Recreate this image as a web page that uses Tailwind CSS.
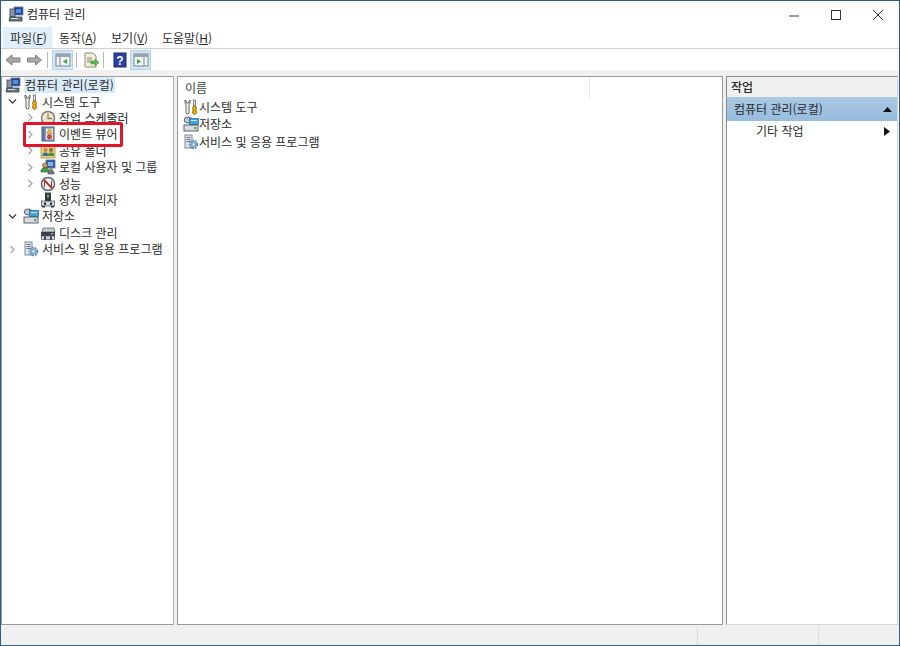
<!DOCTYPE html>
<html lang="ko">
<head>
<meta charset="utf-8">
<title>컴퓨터 관리</title>
<script src="https://cdn.jsdelivr.net/npm/@tailwindcss/browser@4"></script>
</head>
<body class="m-0 overflow-hidden bg-white">
<svg width="0" height="0" class="absolute">
  <defs>
    <symbol id="computer" viewBox="0 0 16 16">
      <rect x="6" y="1" width="9" height="8" fill="#23439a" stroke="#6a7a96" stroke-width=".8"/>
      <rect x="8" y="3" width="5" height="4" fill="#4f90e0"/>
      <rect x="2" y="3" width="5" height="8" fill="#8a93a3" stroke="#3d4656" stroke-width=".8"/>
      <path d="M2 11h12v4H1z" fill="#6f7887" stroke="#333b48" stroke-width=".8"/>
      <rect x="3" y="12" width="7" height="1" fill="#d8dde5"/>
      <path d="M3 14h2M7 14h2M11 14h2" stroke="#2b8f3a"/>
    </symbol>
    <symbol id="tools" viewBox="0 0 16 16">
      <path d="M2 1v3l1 2v8l1 1h1l1-1V6l1-2V1L6 2v2H3.500V2z" fill="#f2f2f2" stroke="#555" stroke-width=".9"/>
      <path d="M10.500 1h2v6h-2z" fill="#e8e8e8" stroke="#666" stroke-width=".8"/>
      <path d="M10.500 7h2l1 2-.5 2 .5 3-1.500 1.500h-1L9.500 14l.5-3-.5-2z" fill="#f2a900" stroke="#7a5200" stroke-width=".7"/>
    </symbol>
    <symbol id="clock" viewBox="0 0 16 16">
      <circle cx="8" cy="8" r="6.500" fill="#efe6cf" stroke="#7a7f86" stroke-width="1.500"/>
      <path d="M8 3.500v5h4" fill="none" stroke="#a08430" stroke-width="1.300"/>
    </symbol>
    <symbol id="viewer" viewBox="0 0 16 16">
      <rect x="2" y="1" width="12" height="14" fill="#8aa0c0" stroke="#4c5f83"/>
      <path d="M2.500 1.500h2v13h-2z" fill="#566c96"/>
      <rect x="6" y="2.500" width="7" height="11" fill="#dfe4ec"/>
      <path d="M9.500 2.500l2.500 5H7z" fill="#f3c21a" stroke="#a57a00" stroke-width=".5"/>
      <circle cx="9.500" cy="10.800" r="2.200" fill="#d8423c" stroke="#8a1c18" stroke-width=".5"/>
    </symbol>
    <symbol id="share" viewBox="0 0 16 16">
      <path d="M1 2h5l1 1h8v12H1z" fill="#ecd27c" stroke="#a58a3c" stroke-width=".8"/>
      <circle cx="5.500" cy="7" r="2" fill="#b98a50"/>
      <path d="M2.500 13v-2l1.500-1.500h3L8 11v2z" fill="#3f6f9a"/>
      <circle cx="11" cy="7" r="2" fill="#8a6a3a"/>
      <path d="M8 13v-2l1.500-1.500h3L14 11v2z" fill="#4f8a48"/>
    </symbol>
    <symbol id="users" viewBox="0 0 16 16">
      <rect x="6" y="1" width="9" height="8" fill="#2f5cb0" stroke="#5a6c8c" stroke-width=".8"/>
      <rect x="8" y="3" width="5" height="4" fill="#80b4ec"/>
      <circle cx="5" cy="6.500" r="2.500" fill="#c89a50" stroke="#6a5020" stroke-width=".6"/>
      <path d="M1 13v-2l2-2h4l2 2v2z" fill="#45a050" stroke="#2a5a30" stroke-width=".6"/>
      <circle cx="11" cy="10" r="1.800" fill="#b08a5a"/>
      <path d="M8 15v-2l1.500-1.500h3L14 13v2z" fill="#6c7788" stroke="#444c5a" stroke-width=".6"/>
    </symbol>
    <symbol id="perf" viewBox="0 0 16 16">
      <circle cx="8" cy="8" r="6.500" fill="#f6f6f6" stroke="#5f646b" stroke-width="1.500"/>
      <path d="M4.500 11V5M11.500 11V5" fill="none" stroke="#555" stroke-width="1.100"/>
      <path d="M4 3.800l8 8.400" fill="none" stroke="#c8201c" stroke-width="1.900"/>
    </symbol>
    <symbol id="device" viewBox="0 0 16 16">
      <rect x="5.500" y="1" width="5" height="8" fill="#30363f" stroke="#1d2128" stroke-width=".8"/>
      <rect x="7" y="2.500" width="2" height="3" fill="#57b060"/>
      <rect x="1.500" y="9" width="13" height="5" fill="#d5d8dd" stroke="#4c5460" stroke-width=".8"/>
      <rect x="4" y="10.500" width="2" height="2.500" fill="#30363f"/>
      <rect x="10" y="10.500" width="2" height="2.500" fill="#30363f"/>
      <path d="M2 14h3v1.500H2zM11 14h3v1.500h-3z" fill="#30363f"/>
    </symbol>
    <symbol id="storage" viewBox="0 0 16 16">
      <ellipse cx="5" cy="4" rx="3.800" ry="3" fill="#c5cad1" stroke="#4c5460" stroke-width=".9"/>
      <rect x="6.500" y="2.500" width="9" height="6" fill="#34a4dc" stroke="#3c6a8e" stroke-width=".8"/>
      <rect x="8" y="4" width="6" height="1.200" fill="#b8e4f6"/>
      <rect x="1" y="9" width="14" height="6" fill="#d7dadf" stroke="#4c5460" stroke-width=".9"/>
      <rect x="11" y="11" width="2.400" height="2" fill="#57b04a"/>
    </symbol>
    <symbol id="disk" viewBox="0 0 16 16">
      <path d="M3 3h11l1 4H2z" fill="#c9ccd1" stroke="#4c5460" stroke-width=".7"/>
      <rect x="1" y="7" width="14" height="4" fill="#3a414b"/>
      <rect x="11" y="8" width="2.200" height="1.500" fill="#6fc05f"/>
      <rect x="1.500" y="11" width="13" height="3.500" fill="#d5d8dd" stroke="#4c5460" stroke-width=".7"/>
      <rect x="4" y="11.500" width="2" height="3" fill="#3a414b"/>
      <rect x="10" y="11.500" width="2" height="3" fill="#3a414b"/>
    </symbol>
    <symbol id="services" viewBox="0 0 16 16">
      <rect x="2" y="1" width="7" height="13" fill="#dfe2e6" stroke="#7a8088" stroke-width=".9"/>
      <path d="M3.500 3.500h4M3.500 5.500h4M3.500 7.500h4" stroke="#6f7680"/>
      <circle cx="10.500" cy="10.500" r="3.700" fill="none" stroke="#5f8fc0" stroke-width="2.200" stroke-dasharray="1.800 .8"/>
      <circle cx="10.500" cy="10.500" r="2.800" fill="#7aa5d0"/>
      <circle cx="10.500" cy="10.500" r="1.200" fill="#f0f4f8"/>
    </symbol>
    <symbol id="chev-r" viewBox="0 0 9 9"><path d="M2.500 1l3.500 3.500L2.500 8" fill="none" stroke="#a6a6a6" stroke-width="1.200"/></symbol>
    <symbol id="chev-d" viewBox="0 0 9 9"><path d="M1 2.500l3.500 3.500L8 2.500" fill="none" stroke="#404040" stroke-width="1.300"/></symbol>
  </defs>
</svg>

<div class="w-[900px] h-[646px] flex flex-col border border-[#2f5f7f] bg-[#f0f0f0] text-[12px] leading-none text-[#2a2a2a] [font-family:'Noto_Sans_CJK_KR','Noto_Sans',sans-serif]">

  <!-- title bar -->
  <div class="h-[26px] shrink-0 flex items-center bg-white pl-[7px]">
    <svg class="w-4 h-4 mr-[3px]"><use href="#computer"/></svg>
    <span>컴퓨터 관리</span>
    <div class="ml-auto flex items-center">
      <svg class="w-[42px] h-[25px]" viewBox="0 0 42 25"><path d="M16 14h10" stroke="#333" stroke-width="1"/></svg>
      <svg class="w-[42px] h-[25px]" viewBox="0 0 42 25"><rect x="16.500" y="8.500" width="9" height="9" fill="none" stroke="#333"/></svg>
      <svg class="w-[42px] h-[25px]" viewBox="0 0 42 25"><path d="M16 8l10 10M26 8L16 18" stroke="#333"/></svg>
    </div>
  </div>

  <!-- menu -->
  <div class="h-[22px] shrink-0 flex items-stretch bg-white border-b border-[#d0d0d0] pl-[2px]">
    <div class="w-[49px] flex items-center pl-[7px] bg-[#e1effa]">파일(<u>F</u>)</div>
    <div class="w-[52px] flex items-center pl-[7px]">동작(<u>A</u>)</div>
    <div class="w-[51px] flex items-center pl-[7px]">보기(<u>V</u>)</div>
    <div class="w-[70px] flex items-center pl-[7px]">도움말(<u>H</u>)</div>
  </div>

  <!-- toolbar -->
  <div class="h-[21px] shrink-0 flex items-center bg-white pl-[4px]">
    <svg class="w-4 h-4 mr-[6px]" viewBox="0 0 16 16"><path d="M1 8l6-5v3h8v4H7v3z" fill="#a8a8a8" stroke="#7e7e7e"/></svg>
    <svg class="w-[15px] h-4 mr-[5px]" viewBox="0 0 15 16"><path d="M14.500 8L8.500 3v3H.5v4h8v3z" fill="#a8a8a8" stroke="#7e7e7e"/></svg>
    <div class="w-px h-[16px] bg-[#b8b8b8] mr-[4px]"></div>
    <div class="w-[21px] h-[20px] bg-[#cfe6f7] border border-[#b0d4ee] flex items-center justify-center mr-[3px]">
      <svg class="w-4 h-4" viewBox="0 0 16 16"><rect x="1" y="2" width="14" height="12" fill="#f4f4f4" stroke="#7d8790"/><path d="M1 2h14v3H1z" fill="#9aa4ae"/><path d="M5 5v9" stroke="#7d8790"/><path d="M12 7l-4 2.500 4 2.500z" fill="#35a045"/></svg>
    </div>
    <div class="w-px h-[16px] bg-[#b8b8b8] mr-[6px]"></div>
    <svg class="w-4 h-4 mr-[4px]" viewBox="0 0 16 16"><path d="M2 1h8l3 3v11H2z" fill="#f5efd8" stroke="#8f8f80"/><path d="M4 6h5M4 8h5M4 10h5" stroke="#8a8a8a"/><path d="M8 9h4V7l4 3.500-4 3.500v-2H8z" fill="#58b848" stroke="#3d8a35" stroke-width=".5"/></svg>
    <div class="w-px h-[16px] bg-[#b8b8b8] mr-[8px]"></div>
    <svg class="w-4 h-4 mr-[2px]" viewBox="0 0 16 16"><rect x="2" y="1" width="12" height="14" fill="#2a3f9e" stroke="#1c2a70"/><text x="8" y="12.500" text-anchor="middle" font-size="12" font-weight="700" fill="#fff" font-family="Liberation Sans">?</text></svg>
    <div class="w-[21px] h-[20px] bg-[#cfe6f7] border border-[#b0d4ee] flex items-center justify-center">
      <svg class="w-4 h-4" viewBox="0 0 16 16"><rect x="1" y="2" width="14" height="12" fill="#f4f4f4" stroke="#7d8790"/><path d="M1 2h14v3H1z" fill="#9aa4ae"/><path d="M11 5v9" stroke="#7d8790"/><path d="M4 7l4 2.500L4 12z" fill="#35a045"/></svg>
    </div>
  </div>

  <!-- panes -->
  <div class="flex-1 min-h-0 flex pt-[6px] pb-[1px] gap-[3px]">
    <!-- tree -->
    <div class="w-[173px] shrink-0 bg-white border border-[#9a9a9a] border-r-[#b0b0b0] pl-[2px]">
      <div class="h-[16.400px] flex items-center">
        <svg class="w-4 h-4 mr-[3px] ml-[1px]"><use href="#computer"/></svg>
        <span class="bg-[#d9ebf9] h-[16px] leading-[16px] px-[1px]">컴퓨터 관리(로컬)</span>
      </div>
      <div class="h-[16.400px] flex items-center pl-[4px]"><svg class="w-[9px] h-[9px] mr-[6px]"><use href="#chev-d"/></svg><svg class="w-4 h-4 mr-[3px]"><use href="#tools"/></svg><span>시스템 도구</span></div>
      <div class="h-[16.400px] flex items-center pl-[22px]"><svg class="w-[9px] h-[9px] mr-[5px]"><use href="#chev-r"/></svg><svg class="w-4 h-4 mr-[3px]"><use href="#clock"/></svg><span>작업 스케줄러</span></div>
      <div class="h-[16.400px] flex items-center pl-[22px] relative"><svg class="w-[9px] h-[9px] mr-[5px]"><use href="#chev-r"/></svg><svg class="w-4 h-4 mr-[3px]"><use href="#viewer"/></svg><span>이벤트 뷰어</span>
        <div class="absolute left-[19px] top-[-4px] w-[100px] h-[25px] border-[3px] border-[#e0142a] rounded-[2px]"></div>
      </div>
      <div class="h-[16.400px] flex items-center pl-[22px]"><svg class="w-[9px] h-[9px] mr-[5px]"><use href="#chev-r"/></svg><svg class="w-4 h-4 mr-[3px]"><use href="#share"/></svg><span>공유 폴더</span></div>
      <div class="h-[16.400px] flex items-center pl-[22px]"><svg class="w-[9px] h-[9px] mr-[5px]"><use href="#chev-r"/></svg><svg class="w-4 h-4 mr-[3px]"><use href="#users"/></svg><span>로컬 사용자 및 그룹</span></div>
      <div class="h-[16.400px] flex items-center pl-[22px]"><svg class="w-[9px] h-[9px] mr-[5px]"><use href="#chev-r"/></svg><svg class="w-4 h-4 mr-[3px]"><use href="#perf"/></svg><span>성능</span></div>
      <div class="h-[16.400px] flex items-center pl-[36px]"><svg class="w-4 h-4 mr-[3px]"><use href="#device"/></svg><span>장치 관리자</span></div>
      <div class="h-[16.400px] flex items-center pl-[4px]"><svg class="w-[9px] h-[9px] mr-[6px]"><use href="#chev-d"/></svg><svg class="w-4 h-4 mr-[3px]"><use href="#storage"/></svg><span>저장소</span></div>
      <div class="h-[16.400px] flex items-center pl-[36px]"><svg class="w-4 h-4 mr-[3px]"><use href="#disk"/></svg><span>디스크 관리</span></div>
      <div class="h-[16.400px] flex items-center pl-[4px]"><svg class="w-[9px] h-[9px] mr-[6px]"><use href="#chev-r"/></svg><svg class="w-4 h-4 mr-[3px]"><use href="#services"/></svg><span>서비스 및 응용 프로그램</span></div>
    </div>

    <!-- list -->
    <div class="w-[546px] shrink-0 bg-white border border-[#9a9a9a]">
      <div class="h-[21px] flex items-center pl-[7px] text-[#444]">
        <span class="w-[404px]">이름</span>
        <div class="w-px h-[21px] bg-[#e5e5e5]"></div>
      </div>
      <div class="h-[17.500px] flex items-center pl-[5px]"><svg class="w-4 h-4"><use href="#tools"/></svg><span>시스템 도구</span></div>
      <div class="h-[17.500px] flex items-center pl-[5px]"><svg class="w-4 h-4"><use href="#storage"/></svg><span>저장소</span></div>
      <div class="h-[17.500px] flex items-center pl-[5px]"><svg class="w-4 h-4"><use href="#services"/></svg><span>서비스 및 응용 프로그램</span></div>
    </div>

    <!-- actions -->
    <div class="flex-1 min-w-0 bg-white border border-[#d8d8d8] border-l-[#8a8a8a] border-t-[#8a8a8a] mr-[1px]">
      <div class="h-[20px] flex items-center pl-[4px] bg-[#f0f0f0] font-medium">작업</div>
      <div class="h-[24px] flex items-center pl-[7px] pr-[5px] bg-gradient-to-b from-[#a9c8e4] to-[#97bcdc]">
        <span>컴퓨터 관리(로컬)</span>
        <svg class="ml-auto w-[9px] h-[6px]" viewBox="0 0 9 6"><path d="M0 6l4.500-5L9 6z" fill="#111"/></svg>
      </div>
      <div class="h-[20px] flex items-center pl-[29px] pr-[7px]">
        <span>기타 작업</span>
        <svg class="ml-auto w-[6px] h-[9px]" viewBox="0 0 6 9"><path d="M0 0l6 4.500L0 9z" fill="#111"/></svg>
      </div>
    </div>
  </div>

  <!-- status bar -->
  <div class="h-[19px] shrink-0 flex bg-[#f0f0f0] pt-[1px]">
    <div class="w-[697px] border-r border-[#dcdcdc]"></div>
    <div class="w-[121px] border-r border-[#dcdcdc]"></div>
    <div class="flex-1"></div>
  </div>
</div>
</body>
</html>
